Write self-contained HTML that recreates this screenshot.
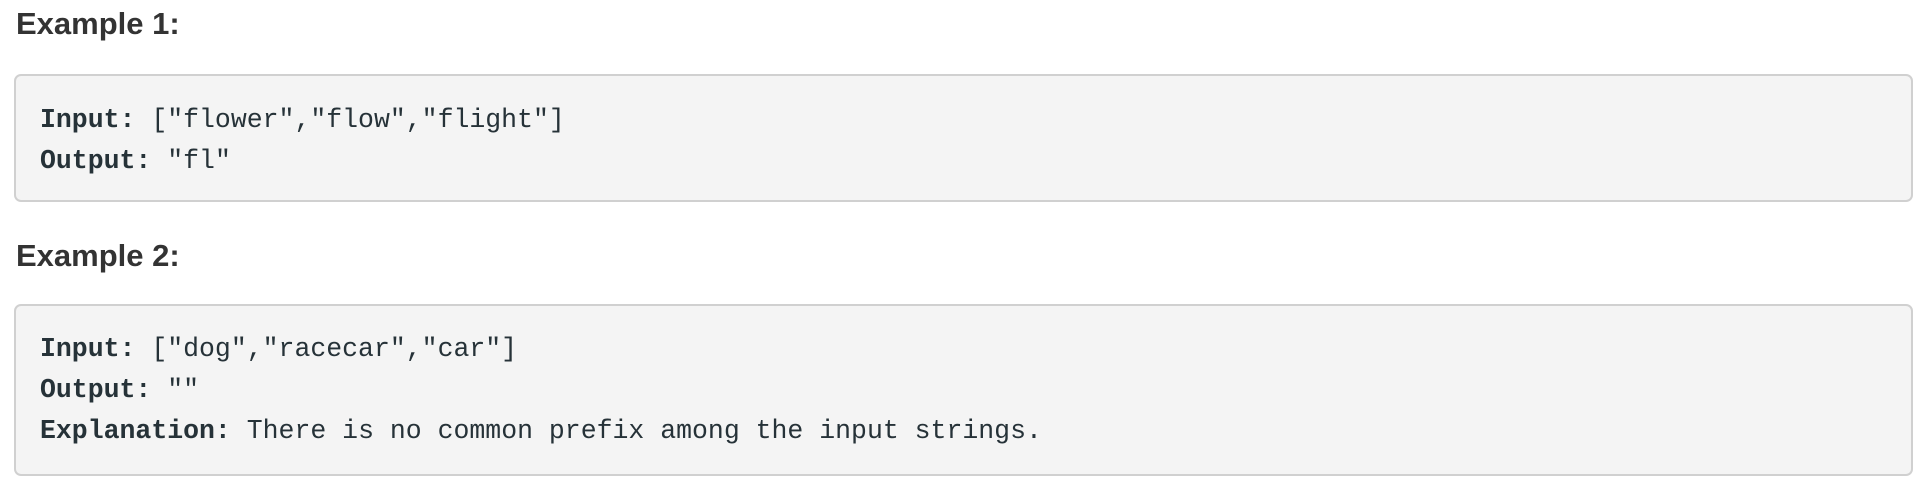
<!DOCTYPE html>
<html><head><meta charset="utf-8"><style>
html,body{margin:0;padding:0;background:#fff;width:1926px;height:477px;overflow:hidden}
h3{position:absolute;left:16px;margin:0;font:bold 31px/36px "Liberation Sans",Arial,sans-serif;color:#333}
pre{position:absolute;left:14px;width:1899px;box-sizing:border-box;margin:0;background:#f4f4f4;border:2px solid #d0d0d0;border-radius:7px;padding:24px 24px 0;font:26.5px/41px "Liberation Mono",monospace;color:#263238;white-space:pre}
b{font-weight:bold}
</style></head><body>
<h3 style="top:6px">Example 1:</h3>
<pre style="top:74px;height:128px"><b>Input:</b> ["flower","flow","flight"]
<b>Output:</b> "fl"</pre>
<h3 style="top:238px">Example 2:</h3>
<pre style="top:304px;height:172px;padding-top:23px"><b>Input:</b> ["dog","racecar","car"]
<b>Output:</b> ""
<b>Explanation:</b> There is no common prefix among the input strings.</pre>
</body></html>
